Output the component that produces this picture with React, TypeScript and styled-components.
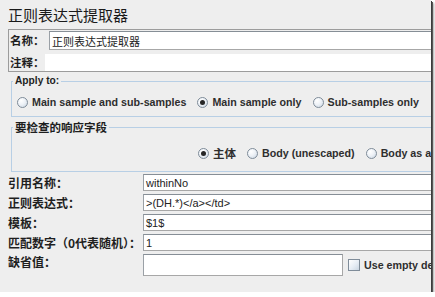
import React from 'react';
import styled, { createGlobalStyle } from 'styled-components';

const GlobalStyle = createGlobalStyle`
  html, body {
    margin: 0;
    padding: 0;
    background: #ffffff;
  }
  body {
    font-family: "Liberation Sans", "Noto Sans CJK SC", sans-serif;
  }
`;

const UI_FONT = `"Liberation Sans", "Noto Sans CJK SC", sans-serif`;
const CJK_FONT = `"Noto Sans CJK SC", "Liberation Sans", sans-serif`;

const Frame = styled.div`
  width: 431px;
  height: 292px;
  overflow: hidden;
  background: #eeeeee;
  box-shadow: 1px 1px 0 #3c3c3c, 2px 2px 0 #555555, 3px 3px 2px rgba(0, 0, 0, 0.35);
`;

const Content = styled.div`
  width: 490px;
  display: flex;
  flex-direction: column;
`;

const Title = styled.div`
  height: 29px;
  padding-left: 8px;
  display: flex;
  align-items: center;
  font: 15px ${CJK_FONT};
  color: #1a1a1a;
`;

const NameBox = styled.div`
  margin-left: 8px;
  border: 1px solid #9c9c9c;
  padding-top: 1px;
  display: flex;
  flex-direction: column;
  gap: 4px;
`;

const BoxRow = styled.div`
  display: flex;
  align-items: center;
`;

const Label = styled.span<{ $w?: number; $top?: boolean; $size?: number }>`
  flex: none;
  box-sizing: border-box;
  width: ${(p) => (p.$w ? `${p.$w}px` : 'auto')};
  padding-left: ${(p) => (p.$w ? '1px' : '0')};
  align-self: ${(p) => (p.$top ? 'start' : 'center')};
  font: bold ${(p) => p.$size ?? 12}px/15px ${CJK_FONT};
  color: #1f1f1f;
  white-space: nowrap;
`;

// the trailing full-width colon sits tight against the caption in the reference
const Colon = styled.span`
  font-feature-settings: "halt";
`;

const TextField = styled.div<{ $h: number; $w?: number; $plain?: boolean }>`
  box-sizing: border-box;
  height: ${(p) => p.$h}px;
  width: ${(p) => (p.$w ? `${p.$w}px` : 'auto')};
  flex: ${(p) => (p.$w ? 'none' : '1')};
  background: #ffffff;
  border: ${(p) => (p.$plain ? 'none' : '1px solid #a7a7a7')};
  border-top-color: #868e96;
  border-left-color: #9aa0a6;
  padding-left: 2px;
  display: flex;
  align-items: center;
  font: 11px ${UI_FONT};
  color: #222222;
  white-space: nowrap;
  overflow: hidden;
`;

const Group = styled.fieldset<{ $pt: number; $pb: number }>`
  margin: 3px 0 0 11px;
  padding: ${(p) => p.$pt}px 0 ${(p) => p.$pb}px 0;
  border: 1px solid #b8cfe5;
  min-width: 0;
`;

const Legend = styled.legend<{ $cjk?: boolean }>`
  margin-left: 1px;
  padding: 0 2px;
  font: bold ${(p) => (p.$cjk ? '11.5px/14px' : '10.2px/12px')} ${(p) => (p.$cjk ? CJK_FONT : UI_FONT)};
  color: #1e1e1e;
`;

const OptionRow = styled.div<{ $pl: number }>`
  display: flex;
  align-items: center;
  height: 14px;
  padding-left: ${(p) => p.$pl}px;
  white-space: nowrap;
`;

const Option = styled.label`
  display: flex;
  align-items: center;
  gap: 4px;
  margin-right: 11px;
  font: bold 10.7px ${UI_FONT};
  color: #2e2e2e;
  white-space: nowrap;
`;

const CjkText = styled.span`
  font: bold 11.5px ${CJK_FONT};
`;

const RadioCircle = styled.span<{ $on?: boolean }>`
  flex: none;
  width: 11px;
  height: 11px;
  box-sizing: border-box;
  border-radius: 50%;
  border: 1px solid #7f8c99;
  background: radial-gradient(circle at 35% 30%, #ffffff 0%, #eef2f7 45%, #c9d5e2 100%);
  display: flex;
  align-items: center;
  justify-content: center;

  &::after {
    content: '';
    display: ${(p) => (p.$on ? 'block' : 'none')};
    width: 5px;
    height: 5px;
    border-radius: 50%;
    background: #262626;
  }
`;

const CheckBox = styled.span`
  flex: none;
  width: 12px;
  height: 12px;
  box-sizing: border-box;
  border: 1px solid #7f8c99;
  background: linear-gradient(135deg, #ffffff 0%, #e6edf5 55%, #c9d5e2 100%);
`;

const Form = styled.div`
  display: grid;
  grid-template-columns: 135px 1fr;
  row-gap: 3px;
  padding-left: 8px;
  margin-top: 2px;
`;

const LastCell = styled.div`
  display: flex;
  align-items: center;
`;

const CheckOption = styled(Option)`
  margin-left: 5px;
`;

const Radio = ({ on, children }: { on?: boolean; children: React.ReactNode }) => (
  <Option>
    <RadioCircle $on={on} />
    {children}
  </Option>
);

const Caption = ({ text }: { text: string }) => (
  <>
    {text}
    <Colon>：</Colon>
  </>
);

const rows = [
  { label: '引用名称', value: 'withinNo' },
  { label: '正则表达式', value: '>(DH.*)</a></td>' },
  { label: '模板', value: '$1$' },
  { label: '匹配数字（0代表随机）', value: '1' },
];

export default function App() {
  return (
    <>
      <GlobalStyle />
      <Frame>
        <Content>
          <Title>正则表达式提取器</Title>

          <NameBox>
            <BoxRow>
              <Label $w={40} $size={11.5}><Caption text="名称" /></Label>
              <TextField $h={19}>正则表达式提取器</TextField>
            </BoxRow>
            <BoxRow>
              <Label $w={36} $size={11.5}><Caption text="注释" /></Label>
              <TextField $h={17} $plain />
            </BoxRow>
          </NameBox>

          <Group $pt={8} $pb={7}>
            <Legend>Apply to:</Legend>
            <OptionRow $pl={5}>
              <Radio>Main sample and sub-samples</Radio>
              <Radio on>Main sample only</Radio>
              <Radio>Sub-samples only</Radio>
            </OptionRow>
          </Group>

          <Group $pt={12} $pb={11}>
            <Legend $cjk>要检查的响应字段</Legend>
            <OptionRow $pl={186}>
              <Radio on>
                <CjkText>主体</CjkText>
              </Radio>
              <Radio>Body (unescaped)</Radio>
              <Radio>Body as a Document</Radio>
            </OptionRow>
          </Group>

          <Form>
            {rows.map((r) => (
              <React.Fragment key={r.label}>
                <Label><Caption text={r.label} /></Label>
                <TextField $h={17}>{r.value}</TextField>
              </React.Fragment>
            ))}
            <Label $top><Caption text="缺省值" /></Label>
            <LastCell>
              <TextField $h={22} $w={200} />
              <CheckOption>
                <CheckBox />
                Use empty default value
              </CheckOption>
            </LastCell>
          </Form>
        </Content>
      </Frame>
    </>
  );
}
